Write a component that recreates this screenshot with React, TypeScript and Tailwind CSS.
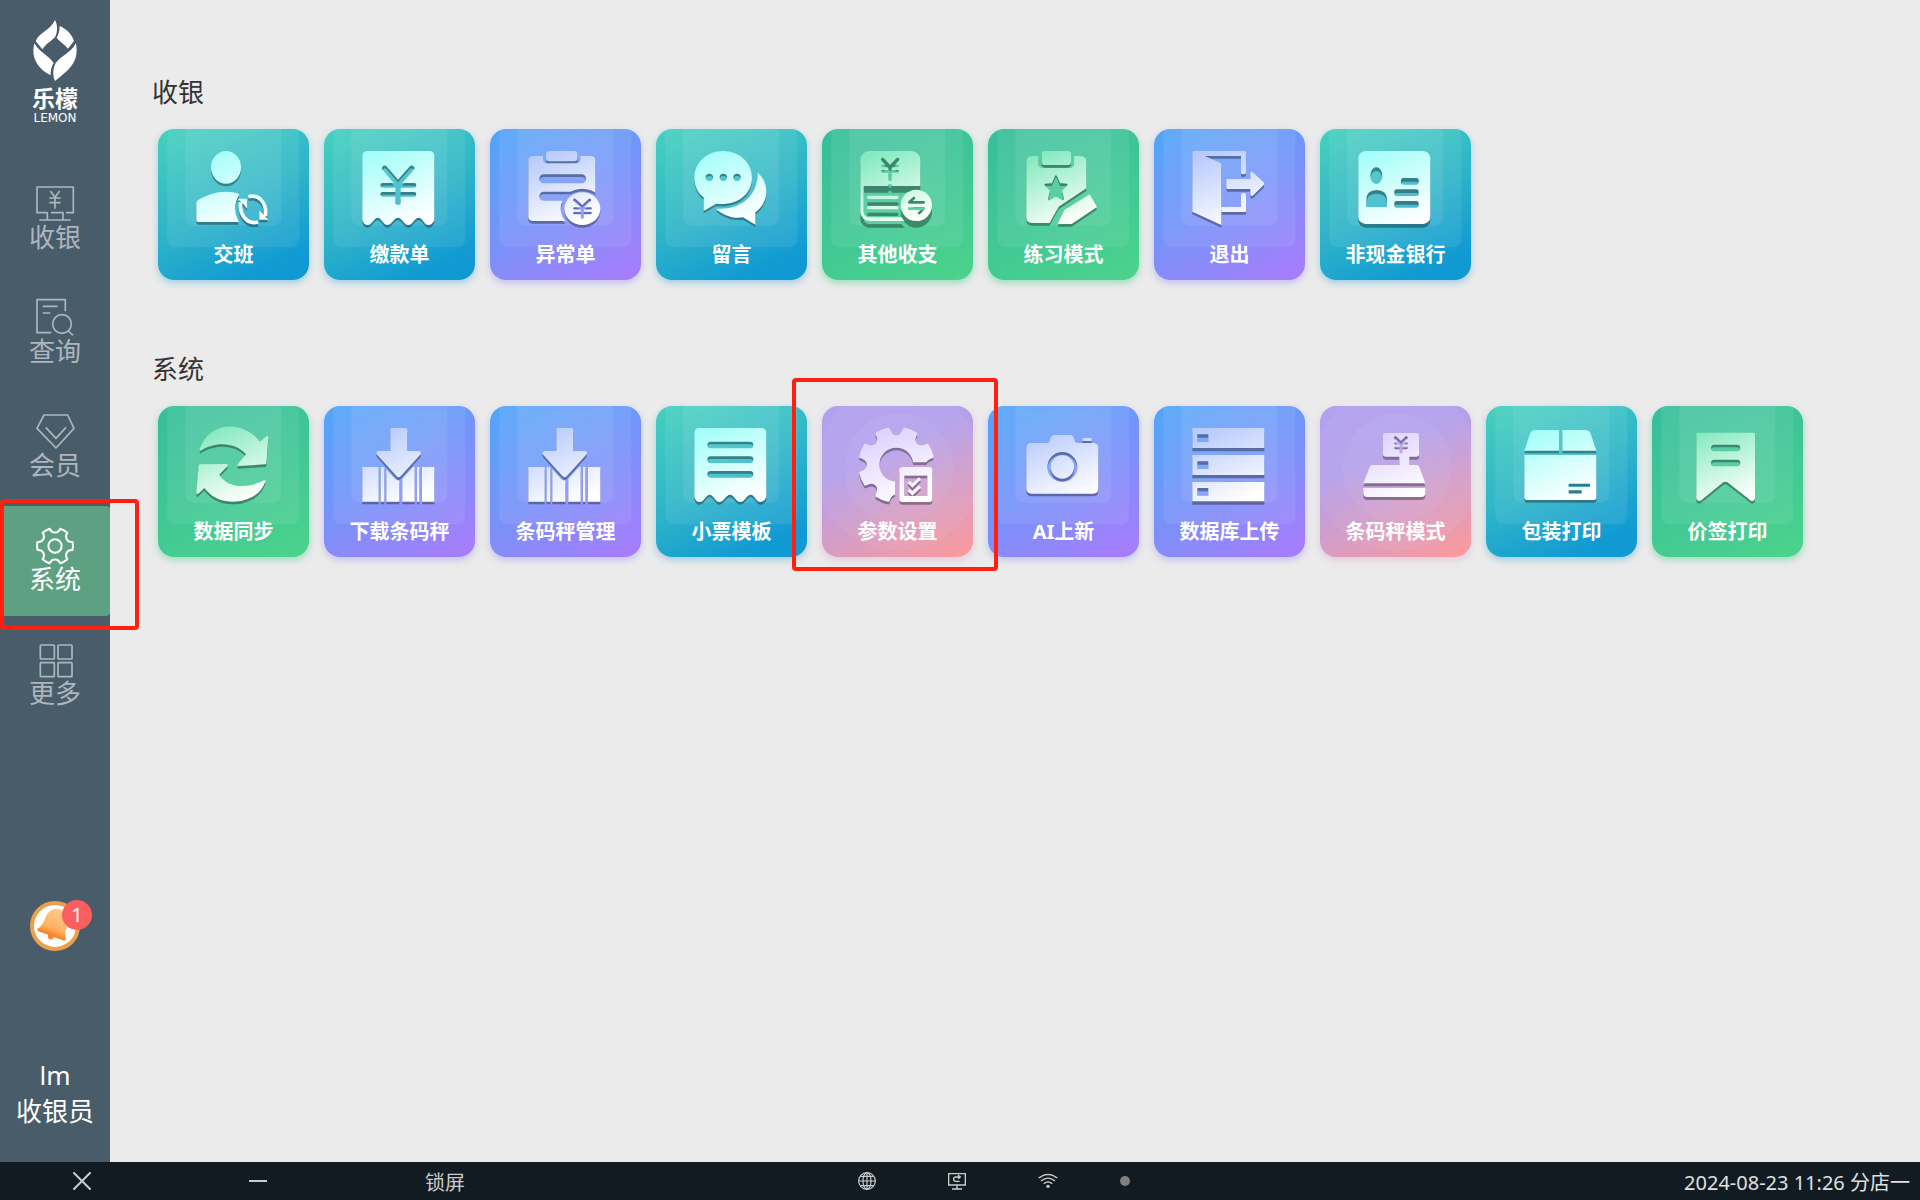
import React from 'react';
import clsx from 'clsx';

type Tone = 'teal' | 'violet' | 'green' | 'pink';

interface TileProps {
  id: string;
  label: string;
  tone: Tone;
  icon: React.ReactNode;
  depth?: number;
  marked?: boolean;
}

const toneClasses: Record<Tone, string> = {
  teal: 'bg-[linear-gradient(155deg,#45d1bd_0%,#2fb5c8_48%,#1099d3_88%)] shadow-[0_3px_7px_rgba(16,153,211,0.35)]',
  violet: 'bg-[linear-gradient(150deg,#50a6fa_0%,#7892f9_50%,#a67dfc_95%)] shadow-[0_3px_7px_rgba(133,125,255,0.4)]',
  green: 'bg-[linear-gradient(155deg,#36be9c_0%,#40c796_50%,#4bd28c_95%)] shadow-[0_3px_7px_rgba(75,210,140,0.5)]',
  pink: 'bg-[linear-gradient(155deg,#b1a1f0_0%,#b4a0ea_35%,#f89aa0_95%)] shadow-[0_3px_7px_rgba(205,140,190,0.35)]',
};

const gradientStart: Record<Tone, string> = {
  teal: '#a6fffa',
  violet: '#b9cbfd',
  green: '#86eac0',
  pink: '#ddd0ff',
};

const gearPath = (cx: number, cy: number, teeth: number, outer: number, inner: number, start: number) => {
  const step = (Math.PI * 2) / teeth;
  const half = step * 0.22;
  const point = (angle: number, r: number) =>
    `${(cx + Math.cos(angle) * r).toFixed(1)} ${(cy + Math.sin(angle) * r).toFixed(1)}`;
  let d = '';
  for (let i = 0; i < teeth; i++) {
    const a = start + i * step;
    d += `${i === 0 ? 'M' : 'L'}${point(a - half, outer)}`;
    d += `Q${point(a, outer * 1.02)} ${point(a + half, outer)}`;
    d += `C${point(a + half * 1.2, inner)} ${point(a + step - half * 1.2, inner)} ${point(a + step - half, outer)}`;
  }
  return d + 'Z';
};

// Tile icons are masks: white parts are painted, black parts are cut out.
const cut = { fill: 'none', stroke: '#000', strokeLinecap: 'round', strokeLinejoin: 'round' } as const;

const receipt = (
  <path d="M131 66H315Q331 66 331 82V273Q325 288 313 288C300 288 296 266 284 266C272 266 266 288 253 288C240 288 234 266 222 266C210 266 203 288 190 288C178 288 172 266 161 266C150 266 144 288 131 288Q119 288 115 273V82Q115 66 131 66Z" />
);

const barcode = (
  <>
    <path d="M115 183H164V287H115ZM170 183H181V287H170ZM187 183H226V287H187ZM235 183H272V287H235ZM279 183H286V287H279ZM294 183H331V287H294Z" />
    <path fill="#000" stroke="#000" strokeWidth="18" strokeLinejoin="round" d="M204 66H245Q250 66 250 71V135H284Q296 137 288 147L230 211Q224 217 218 211L160 147Q152 137 164 135H199V71Q199 66 204 66Z" />
    <path d="M204 66H245Q250 66 250 71V135H284Q296 137 288 147L230 211Q224 217 218 211L160 147Q152 137 164 135H199V71Q199 66 204 66Z" />
  </>
);

const cashierTiles: TileProps[] = [
  {
    id: 'shift',
    label: '交班',
    tone: 'teal',
    icon: (
      <>
        <ellipse cx="204" cy="115" rx="45" ry="49" />
        <path d="M115 223Q115 217 121 213C145 198 175 188 204 188C222 188 236 191 244 196Q220 238 243 279H123Q115 279 115 272Z" />
        <path d="M271 203C304 194 328 224 322 262M300 279C268 288 243 258 248 220" fill="none" stroke="#fff" strokeWidth="11" />
        <path d="M239 209H267V239L258 227ZM331 272H304V245L314 254Z" />
      </>
    ),
  },
  {
    id: 'payment',
    label: '缴款单',
    tone: 'teal',
    icon: (
      <>
        {receipt}
        <g {...cut}>
          <path strokeWidth="16" d="M182 118L222 164L263 118M222 164V220" />
          <path strokeWidth="14" d="M176 169H270M176 196H270" />
        </g>
      </>
    ),
  },
  {
    id: 'abnormal',
    label: '异常单',
    tone: 'violet',
    icon: (
      <>
        <rect x="115" y="81" width="201" height="195" rx="13" />
        <rect x="159" y="60" width="112" height="43" rx="12" fill="#000" />
        <rect x="168" y="66" width="94" height="31" rx="10" />
        <rect x="148" y="136" width="140" height="27" rx="13" fill="#000" />
        <rect x="148" y="188" width="140" height="27" rx="13" fill="#000" />
        <ellipse cx="277" cy="239" rx="65" ry="60" fill="#000" />
        <ellipse cx="277" cy="239" rx="54" ry="49" />
        <g {...cut}>
          <path strokeWidth="9" d="M254 213L277 234L299 213M277 234V265" />
          <path strokeWidth="7" d="M253 238H302M253 252H302" />
        </g>
      </>
    ),
  },
  {
    id: 'message',
    label: '留言',
    tone: 'teal',
    depth: 7,
    icon: (
      <>
        <path d="M143 246V205C125 192 115 170 115 146C115 101 153 66 201 66C250 66 288 101 288 146C288 198 240 231 181 224Z" />
        <circle cx="160" cy="145" r="11" fill="#000" />
        <circle cx="202" cy="145" r="11" fill="#000" />
        <circle cx="243" cy="145" r="11" fill="#000" />
        <path d="M305 131C322 145 331 165 331 188C331 212 318 236 298 250V287L261 265C230 270 200 258 180 239C250 244 306 205 305 131Z" />
      </>
    ),
  },
  {
    id: 'other',
    label: '其他收支',
    tone: 'green',
    depth: 20,
    icon: (
      <>
        <rect x="115" y="66" width="180" height="210" rx="27" />
        <path fill="#000" d="M125 171H300V265H143Q125 265 125 247ZM236 262H300V280H250Z" />
        <path fill="none" stroke="#fff" strokeWidth="10" strokeLinecap="round" d="M140 205H225M140 236H225" />
        <g {...cut}>
          <path strokeWidth="10" d="M182 91L204 115L227 91M204 115V151" />
          <path strokeWidth="8" d="M182 111H227M182 127H227" />
        </g>
        <circle cx="204" cy="171" r="6" fill="#000" />
        <circle cx="283" cy="229" r="54" fill="#000" />
        <circle cx="283" cy="229" r="47" />
        <path {...cut} strokeWidth="8" d="M305 220H262L276 207M262 239H305L291 253" />
      </>
    ),
  },
  {
    id: 'practice',
    label: '练习模式',
    tone: 'green',
    icon: (
      <>
        <path d="M133 81H277Q295 81 295 99V178L212 233L185 282H132Q115 282 115 265V99Q115 81 133 81Z" />
        <rect x="151" y="60" width="107" height="57" rx="13" fill="#000" />
        <rect x="161" y="66" width="88" height="42" rx="10" />
        <path fill="#000" stroke="#000" strokeWidth="6" strokeLinejoin="round" d="M204 142L214 165L236 167L219 184L225 211L204 199L183 211L189 184L172 167L194 165Z" />
        <path d="M209 285L229 243L305 196L327 234L251 285Z" />
      </>
    ),
  },
  {
    id: 'exit',
    label: '退出',
    tone: 'violet',
    icon: (
      <>
        <path d="M119 66H272Q276 66 276 70V131Q276 136 268 136Q261 136 261 131V81H152L198 101Q202 103 202 107V288L115 248V70Q115 66 119 66Z" />
        <path d="M202 234H261V197Q261 192 268 192Q276 192 276 197V245Q276 249 272 249H202Z" />
        <path d="M221 150H289V134Q290 125 298 131L329 160Q333 164 329 168L298 199Q290 204 289 196V180H221Q217 180 217 176V154Q217 150 221 150Z" />
      </>
    ),
  },
  {
    id: 'bank',
    label: '非现金银行',
    tone: 'teal',
    depth: 11,
    icon: (
      <>
        <rect x="115" y="66" width="216" height="219" rx="22" />
        <g fill="#000">
          <ellipse cx="169" cy="140" rx="18" ry="25" />
          <path d="M139 234V213Q139 183 170 183Q201 183 201 213V234Z" />
          <rect x="243" y="147" width="53" height="20" rx="7" />
          <rect x="223" y="181" width="73" height="20" rx="7" />
          <rect x="223" y="216" width="73" height="20" rx="7" />
        </g>
      </>
    ),
  },
];

const systemTiles: TileProps[] = [
  {
    id: 'sync',
    label: '数据同步',
    tone: 'green',
    icon: (
      <>
        <path d="M125 130C150 48 252 38 306 107L326 90Q331 88 331 94L325 172Q325 175 321 175L243 180Q236 180 240 173L264 145C235 108 170 105 128 134Q124 135 125 130Z" />
        <path d="M322 227C308 266 270 287 222 287C182 287 155 267 139 246L120 264Q115 266 115 260L122 179Q123 175 127 175L205 174Q212 175 208 181L184 206C208 248 272 248 318 223Q324 221 322 227Z" />
      </>
    ),
  },
  { id: 'scale-download', label: '下载条码秤', tone: 'violet', icon: barcode },
  { id: 'scale-manage', label: '条码秤管理', tone: 'violet', icon: barcode },
  {
    id: 'ticket',
    label: '小票模板',
    tone: 'teal',
    icon: (
      <>
        {receipt}
        <path {...cut} strokeWidth="20" d="M164 117H282M164 161H282M164 205H282" />
      </>
    ),
  },
  {
    id: 'settings',
    label: '参数设置',
    tone: 'pink',
    marked: true,
    icon: (
      <>
        <path d={gearPath(223, 176, 8, 110, 78, Math.PI / 8)} stroke="#fff" strokeWidth="8" strokeLinejoin="round" />
        <circle cx="223" cy="176" r="51" fill="#000" />
        <path fill="#000" d="M219 169H345V300H219Z" />
        <rect x="232" y="183" width="99" height="105" rx="9" />
        <rect x="247" y="209" width="69" height="61" fill="#000" />
        <path fill="none" stroke="#fff" strokeWidth="9" d="M260 227L271 239L294 217M260 251L271 263L294 241" />
      </>
    ),
  },
  {
    id: 'ai',
    label: 'AI上新',
    tone: 'violet',
    icon: (
      <>
        <path d="M131 111H178Q184 111 185 105Q188 87 199 87H247Q257 87 260 105Q262 111 268 111H315Q331 111 331 127V247Q331 263 315 263H131Q115 263 115 247V127Q115 111 131 111Z" />
        <rect x="283" y="96" width="28" height="9" rx="3" />
        <circle cx="223" cy="183" r="40" fill="none" stroke="#000" strokeWidth="10" />
      </>
    ),
  },
  {
    id: 'database',
    label: '数据库上传',
    tone: 'violet',
    depth: 10,
    icon: (
      <>
        <path d="M115 66H331V126H115ZM115 147H331V207H115ZM115 228H331V286H115Z" />
        <path fill="#000" d="M130 85H163V108H130ZM130 166H163V189H130ZM130 246H163V269H130Z" />
      </>
    ),
  },
  {
    id: 'scale-mode',
    label: '条码秤模式',
    tone: 'pink',
    depth: 9,
    icon: (
      <>
        <rect x="189" y="81" width="108" height="71" rx="8" />
        <path d="M238 145H268V180H238Z" />
        <path d="M158 177H289Q296 177 298 183L316 232H130L149 183Q151 177 158 177Z" />
        <path d="M130 246H316V261Q316 273 304 273H142Q130 273 130 261Z" />
        <g {...cut}>
          <path strokeWidth="9" d="M226 95L243 111L259 95M243 111V137" />
          <path strokeWidth="7" d="M226 112H260M226 126H260" />
        </g>
      </>
    ),
  },
  {
    id: 'package',
    label: '包装打印',
    tone: 'teal',
    icon: (
      <>
        <path d="M147 72H219V134H115L132 83Q136 72 147 72ZM229 72H299Q310 72 314 83L331 134H229Z" />
        <path d="M115 147H331V274Q331 282 323 282H123Q115 282 115 274Z" />
        <path {...cut} strokeLinecap="butt" strokeWidth="10" d="M248 238H312M248 258H287" />
      </>
    ),
  },
  {
    id: 'tag',
    label: '价签打印',
    tone: 'green',
    icon: (
      <>
        <path d="M137 80H305Q309 80 309 84V277Q308 287 297 284L226 229Q220 225 214 229L146 284Q134 287 133 277V84Q133 80 137 80Z" />
        <path {...cut} strokeWidth="20" d="M187 126H255M187 171H255" />
      </>
    ),
  },
];

const navItems = [
  {
    label: '收银',
    icon: (
      <>
        <path d="M34 100V80H3V3H112V80H90M45 80H81V100M10 102H104" />
        <path d="M43 15L57 34L71 15M57 34V68M40 36H74M40 50H74" />
      </>
    ),
  },
  {
    label: '查询',
    icon: (
      <>
        <path d="M88 34V-1H3V98H46M20 19H65M20 39H43M97 93L111 106" />
        <circle cx="78" cy="72" r="28" />
      </>
    ),
  },
  {
    label: '会员',
    icon: <path d="M24 3H95L114 43L60 102L3 43ZM29 40L60 73L90 40" />,
  },
  {
    label: '系统',
    active: true,
    icon: (
      <>
        <path d={gearPath(57, 54, 6, 54, 38, 0)} strokeWidth="6" />
        <circle cx="57" cy="54" r="20" strokeWidth="6" />
      </>
    ),
  },
  {
    label: '更多',
    icon: (
      <>
        <rect x="13" y="9" width="42" height="42" rx="2" />
        <rect x="66" y="9" width="42" height="42" rx="2" />
        <rect x="13" y="62" width="42" height="42" rx="2" />
        <rect x="66" y="62" width="42" height="42" rx="2" />
      </>
    ),
  },
];

const Tile: React.FC<TileProps> = ({ id, label, tone, icon, depth = 8, marked }) => (
  <div className="relative">
    <button
      type="button"
      className={clsx('grid size-[151px] cursor-pointer overflow-hidden rounded-2xl', toneClasses[tone])}
    >
      <svg viewBox="0 0 453 453" className="col-start-1 row-start-1 size-full" aria-hidden="true">
        <defs>
          <linearGradient id={`${id}-fill`} gradientUnits="userSpaceOnUse" x1="170" y1="70" x2="260" y2="285">
            <stop offset="0" stopColor={gradientStart[tone]} />
            <stop offset="1" stopColor="#fff" />
          </linearGradient>
          <mask id={`${id}-mask`} maskUnits="userSpaceOnUse" x="0" y="0" width="453" height="453">
            <g fill="#fff">{icon}</g>
          </mask>
        </defs>
        {tone === 'pink' ? (
          <g fill="#fff" fillOpacity="0.05">
            <circle cx="231" cy="186" r="249" />
            <circle cx="231" cy="186" r="164" />
          </g>
        ) : (
          <g fill="#fff" fillOpacity="0.08">
            <rect x="28" y="-30" width="396" height="385" rx="24" />
            <rect x="82" y="-30" width="288" height="320" rx="24" />
          </g>
        )}
        <rect width="453" height="453" fillOpacity="0.34" mask={`url(#${id}-mask)`} transform={`translate(0 ${depth})`} />
        <rect width="453" height="453" fill={`url(#${id}-fill)`} mask={`url(#${id}-mask)`} />
      </svg>
      <span className="col-start-1 row-start-1 self-end pb-[11px] text-xl leading-7 font-bold text-white">{label}</span>
    </button>
    {marked && (
      <span className="pointer-events-none absolute -top-7 -left-[30px] z-10 h-[193px] w-[206px] rounded border-4 border-[#ff2011]" />
    )}
  </div>
);

const Section: React.FC<{ title: string; tiles: TileProps[] }> = ({ title, tiles }) => (
  <section>
    <h2 className="text-[26px] leading-9 text-[#333]">{title}</h2>
    <div className="mt-[19px] ml-1.5 flex flex-wrap gap-[15px]">
      {tiles.map((tile) => (
        <Tile key={tile.id} {...tile} />
      ))}
    </div>
  </section>
);

const Logo = () => (
  <div className="flex flex-col items-center text-white">
    <svg viewBox="96 57 138 190" className="h-[63px] w-[46px]" fill="currentColor" aria-hidden="true">
      <path d="M165 60C173 75 173 92 167 108C158 122 140 128 127 148L107 124C115 98 152 92 165 60Z" />
      <path d="M179 78C202 88 217 105 222 123L204 147C195 133 182 128 170 114C176 102 179 92 179 78Z" />
      <path d="M103 130C92 168 108 205 152 227C151 212 155 200 161 190C145 165 118 158 103 130Z" />
      <path d="M228 130C239 185 210 208 165 244C157 225 159 207 167 190C185 166 212 160 228 130Z" />
    </svg>
    <span className="mt-0.5 text-[23px] leading-7 font-bold">乐檬</span>
    <span className="font-['DejaVu_Sans'] text-xs leading-3">LEMON</span>
  </div>
);

const Sidebar = () => (
  <aside className="flex w-[110px] shrink-0 flex-col bg-[#495c6a] pt-[19px] pb-[33px]">
    <Logo />
    <nav className="mt-10 flex flex-col gap-1">
      {navItems.map(({ label, icon, active }) => (
        <div key={label} className="relative">
          <a
            href="#"
            className={clsx(
              'flex h-[110px] flex-col items-center rounded pt-[22px]',
              active ? 'bg-[#5ea182] text-white' : 'text-[#adb6be]'
            )}
          >
            <svg
              viewBox="0 0 114 108"
              className="h-9 w-[38px] overflow-visible"
              fill="none"
              stroke="currentColor"
              strokeWidth="5"
              strokeLinejoin="round"
              aria-hidden="true"
            >
              {icon}
            </svg>
            <span className="text-[26px] leading-[30px]">{label}</span>
          </a>
          {active && (
            <span className="pointer-events-none absolute -top-[7px] left-0 z-10 h-[131px] w-[139px] rounded border-4 border-[#ff2011]" />
          )}
        </div>
      ))}
    </nav>

    <div className="mt-auto flex flex-col items-center gap-[106px]">
      <button type="button" className="relative cursor-pointer" aria-label="1">
        <svg viewBox="0 0 150 150" className="size-[50px]" aria-hidden="true">
          <defs>
            <linearGradient id="bell" x1="0" y1="0" x2="0" y2="1">
              <stop offset="0" stopColor="#ffc98c" />
              <stop offset="0.7" stopColor="#ffb266" />
              <stop offset="0.85" stopColor="#ff9a3c" />
              <stop offset="1" stopColor="#fb7a1c" />
            </linearGradient>
          </defs>
          <circle cx="75" cy="75" r="69" fill="#fff" stroke="#eaa04c" strokeWidth="12" />
          <g transform="rotate(20 72 75)">
            <path d="M64 104H84Q83 117 74 117Q65 117 64 104Z" fill="#f98a33" />
            <path d="M74 22C98 22 108 40 109 62C110 80 111 90 120 100Q119 107 110 106H38Q29 107 28 100C37 90 38 80 39 62C40 40 50 22 74 22Z" fill="url(#bell)" />
          </g>
        </svg>
        <span className="absolute -top-px -right-3 flex size-[30px] items-center justify-center rounded-full bg-[#fb5e5e] text-xl leading-7 text-white">
          1
        </span>
      </button>
      <p className="text-center text-[26px] leading-9 text-white">
        lm
        <br />
        收银员
      </p>
    </div>
  </aside>
);

const StatusBar = () => (
  <footer className="flex h-[38px] shrink-0 items-center bg-[#111b21] pr-2.5 pl-[73px] text-xl leading-7 text-[#ccc]">
    <div className="flex items-center gap-[158px]">
      <button type="button" aria-label="关闭" className="cursor-pointer">
        <svg viewBox="0 0 18 18" className="size-[18px]" stroke="currentColor" strokeWidth="2" strokeLinecap="round">
          <path d="M1 1L17 17M17 1L1 17" />
        </svg>
      </button>
      <button type="button" aria-label="最小化" className="cursor-pointer">
        <svg viewBox="0 0 18 18" className="size-[18px]" stroke="currentColor" strokeWidth="2">
          <path d="M0 9H18" />
        </svg>
      </button>
      <button type="button" className="cursor-pointer pt-1">锁屏</button>
    </div>

    <div className="ml-[393px] flex items-center gap-[72px]">
      <svg viewBox="0 0 54 54" className="size-[18px]" fill="none" stroke="currentColor" strokeWidth="3.5" aria-hidden="true">
        <circle cx="27" cy="27" r="25" />
        <ellipse cx="27" cy="27" rx="12" ry="25" />
        <path d="M27 2V52M2 27H52M7 13H47M7 41H47" />
      </svg>
      <svg viewBox="0 0 54 54" className="size-[18px]" fill="none" stroke="currentColor" strokeWidth="4" aria-hidden="true">
        <path d="M2 5H52V39H2ZM27 39V51M12 51H42" />
        <path d="M35 28H23Q17 28 17 21Q17 15 23 15H33M30 9L37 15L30 20" />
      </svg>
      <svg viewBox="0 0 60 54" className="h-[18px] w-5" fill="none" stroke="currentColor" strokeWidth="4" aria-hidden="true">
        <path d="M2 18Q30 -4 58 18M9 27Q30 10 51 27M17 35Q30 24 43 35" />
        <circle cx="30" cy="43" r="5" fill="currentColor" stroke="none" />
      </svg>
      <span className="-ml-2.5 size-2.5 rounded-full bg-[#808080]" />
    </div>

    <p className="ml-auto pt-1 whitespace-nowrap text-[#e0e0e0]">2024-08-23 11:26 分店一</p>
  </footer>
);

const App = () => (
  <div className="flex min-h-screen flex-col bg-[#ebebeb] font-['Noto_Sans','Noto_Sans_CJK_SC',sans-serif]">
    <div className="flex flex-1">
      <Sidebar />
      <main className="flex flex-1 flex-col gap-[71px] pt-[74px] pl-[42px]">
        <Section title="收银" tiles={cashierTiles} />
        <Section title="系统" tiles={systemTiles} />
      </main>
    </div>
    <StatusBar />
  </div>
);

export default App;
